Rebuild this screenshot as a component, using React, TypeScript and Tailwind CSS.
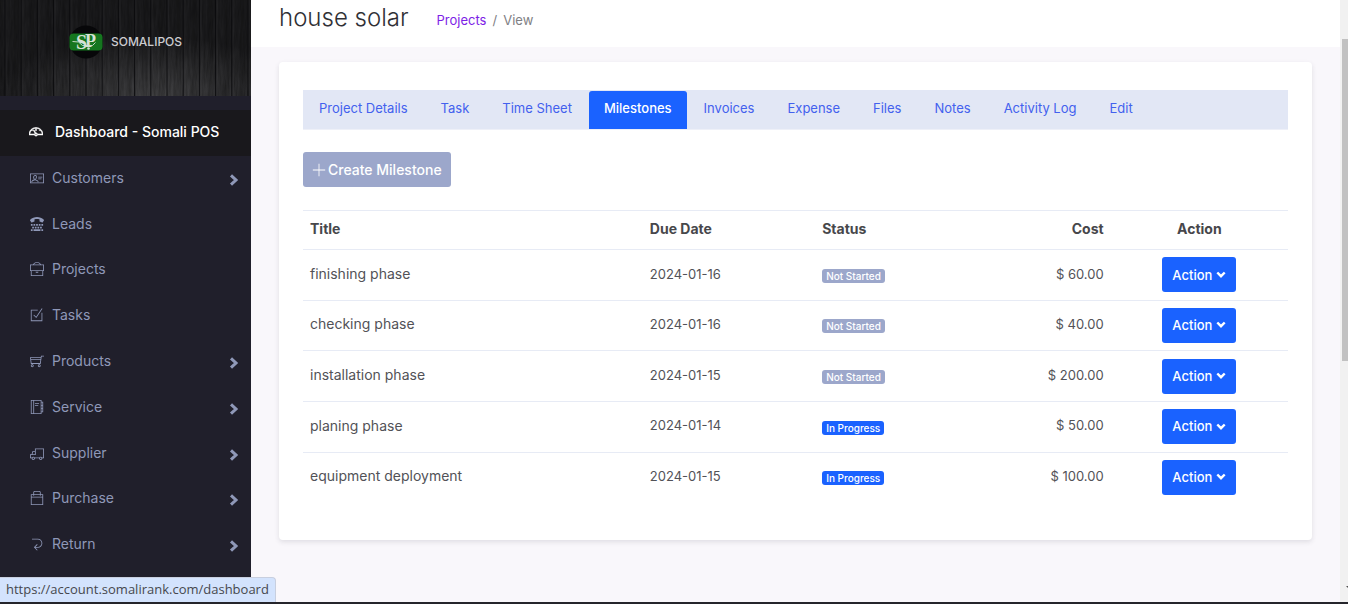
import type { ComponentType } from "react";
import { FaTty } from "react-icons/fa";
import {
  TfiAgenda,
  TfiBackLeft,
  TfiBag,
  TfiBriefcase,
  TfiCheckBox,
  TfiDashboard,
  TfiIdBadge,
  TfiPlus,
  TfiShoppingCart,
  TfiTruck,
} from "react-icons/tfi";

type NavItem = {
  label: string;
  icon: ComponentType<{ className?: string }>;
  expandable?: boolean;
};

const navItems: NavItem[] = [
  { label: "Customers", icon: TfiIdBadge, expandable: true },
  { label: "Leads", icon: FaTty },
  { label: "Projects", icon: TfiBriefcase },
  { label: "Tasks", icon: TfiCheckBox },
  { label: "Products", icon: TfiShoppingCart, expandable: true },
  { label: "Service", icon: TfiAgenda, expandable: true },
  { label: "Supplier", icon: TfiTruck, expandable: true },
  { label: "Purchase", icon: TfiBag, expandable: true },
  { label: "Return", icon: TfiBackLeft, expandable: true },
];

const tabs = [
  "Project Details",
  "Task",
  "Time Sheet",
  "Milestones",
  "Invoices",
  "Expense",
  "Files",
  "Notes",
  "Activity Log",
  "Edit",
];

const milestones = [
  { title: "finishing phase", due: "2024-01-16", status: "Not Started", cost: "$ 60.00" },
  { title: "checking phase", due: "2024-01-16", status: "Not Started", cost: "$ 40.00" },
  { title: "installation phase", due: "2024-01-15", status: "Not Started", cost: "$ 200.00" },
  { title: "planing phase", due: "2024-01-14", status: "In Progress", cost: "$ 50.00" },
  { title: "equipment deployment", due: "2024-01-15", status: "In Progress", cost: "$ 100.00" },
];

function WoodTexture() {
  return (
    <svg
      className="absolute inset-0 h-full w-full"
      viewBox="0 0 251 96"
      preserveAspectRatio="none"
      aria-hidden="true"
    >
      <defs>
        <radialGradient id="glow" cx="0.6" cy="1" r="0.62">
          <stop offset="0" stopColor="#434345" />
          <stop offset="0.5" stopColor="#303032" />
          <stop offset="1" stopColor="#1c1c1e" />
        </radialGradient>
        <pattern id="boards" x="4.5" width="16.2" height="96" patternUnits="userSpaceOnUse">
          <rect width="1.3" height="96" fill="#08080a" fillOpacity="0.85" />
          <rect x="1.3" width="1" height="96" fill="#ffffff" fillOpacity="0.06" />
          <rect x="9" width="5" height="96" fill="#000000" fillOpacity="0.1" />
        </pattern>
        <filter id="grain" x="0" y="0" width="100%" height="100%">
          <feTurbulence type="fractalNoise" baseFrequency="0.5 0.05" numOctaves="3" seed="4" />
          <feColorMatrix values="0 0 0 0 0  0 0 0 0 0  0 0 0 0 0  1.2 0 0 0 -0.3" />
        </filter>
      </defs>
      <rect width="251" height="96" fill="url(#glow)" />
      <rect width="251" height="96" filter="url(#grain)" opacity="0.4" />
      <rect width="251" height="96" fill="url(#boards)" />
    </svg>
  );
}

function Logo() {
  return (
    <svg className="size-[34px]" viewBox="0 0 34 34" aria-hidden="true">
      <circle cx="17" cy="17" r="16.5" fill="#070709" />
      <rect x="0.5" y="8.5" width="33" height="17" rx="4" fill="#15761f" />
      <g fontFamily="Liberation Serif, serif" fontWeight="700" fill="#d5e2d6">
        <text x="7" y="24" fontSize="20">
          S
        </text>
        <text x="16" y="22" fontSize="18">
          P
        </text>
      </g>
      <path d="M3.5 16.5l6 .5 4 3.500h10l3-3" fill="none" stroke="#d5e2d6" strokeWidth="0.9" />
      <circle cx="19.500" cy="23.500" r="1.300" fill="#d5e2d6" />
    </svg>
  );
}

function ChevronRight() {
  return (
    <svg className="mt-1 ml-auto h-3 w-2.5" viewBox="0 0 10 12" aria-hidden="true">
      <path d="M2 1.300L7 6 2 10.700" fill="none" stroke="currentColor" strokeWidth="3" />
    </svg>
  );
}

function ChevronDown() {
  return (
    <svg className="h-2.5 w-2.5" viewBox="0 0 10 10" aria-hidden="true">
      <path d="M1.300 2.500L5 6.200l3.700-3.700" fill="none" stroke="currentColor" strokeWidth="2.400" />
    </svg>
  );
}

function Sidebar() {
  return (
    <aside className="w-[251px] shrink-0 bg-[#201f2b]">
      <a href="#home" className="relative flex h-24 items-center justify-center">
        <WoodTexture />
        <span className="relative flex items-center gap-2 pb-3 text-xs font-medium text-[#cbcbd0]">
          <Logo />
          SOMALIPOS
        </span>
      </a>
      <nav className="pt-3.5">
        <a
          href="#dashboard"
          className="flex h-[46px] items-center gap-3 bg-[#19181c] pb-0.5 pl-[29px] text-sm font-medium text-white"
        >
          <TfiDashboard className="size-3.5 stroke-white stroke-[0.7]" />
          Dashboard - Somali POS
        </a>
        <ul className="grid h-[412px] auto-rows-fr">
          {navItems.map(({ label, icon: Icon, expandable }) => (
            <li key={label}>
              <a
                href={`#${label.toLowerCase()}`}
                className="flex h-full items-center gap-2 pr-3 pb-0.5 pl-[30px] text-sm text-[#8f98b8]"
              >
                <Icon className="size-3.5" />
                {label}
                {expandable && <ChevronRight />}
              </a>
            </li>
          ))}
        </ul>
      </nav>
    </aside>
  );
}

function StatusBadge({ status }: { status: string }) {
  const tone = status === "In Progress" ? "bg-[#1a62ff]" : "bg-[#9ca7cb]";
  return (
    <span
      className={`inline-block rounded-[3px] px-1 text-[10px] leading-[14px] font-medium text-white ${tone}`}
    >
      {status}
    </span>
  );
}

function MilestoneTable() {
  return (
    <table className="mt-[23px] h-[292px] w-full table-fixed border-collapse text-sm text-[#525257]">
      <colgroup>
        <col className="w-[34.5%]" />
        <col className="w-[17.5%]" />
        <col className="w-[15%]" />
        <col className="w-[15%]" />
        <col className="w-[18%]" />
      </colgroup>
      <thead>
        <tr className="h-[39px] border-t border-[#e7ebf5] text-[#47474b]">
          <th className="px-[7px] pb-0.5 text-left">Title</th>
          <th className="px-[7px] pb-0.5 text-left">Due Date</th>
          <th className="px-[7px] pb-0.5 text-left">Status</th>
          <th className="px-[7px] pb-0.5 text-right">Cost</th>
          <th className="px-[7px] pb-0.5 text-center">Action</th>
        </tr>
      </thead>
      <tbody>
        {milestones.map((m) => (
          <tr key={m.title} className="border-t border-[#e7ebf5]">
            <td className="px-[7px] pb-0.5">{m.title}</td>
            <td className="px-[7px] pb-0.5 text-[13px]">{m.due}</td>
            <td className="px-[7px]">
              <StatusBadge status={m.status} />
            </td>
            <td className="px-[7px] pb-0.5 text-right text-[13px]">{m.cost}</td>
            <td className="px-[7px] text-center">
              <button
                type="button"
                className="inline-flex h-[35px] items-center gap-1 rounded-[3px] bg-[#1a62ff] px-2.5 align-middle text-[13px] font-medium text-white"
              >
                Action
                <ChevronDown />
              </button>
            </td>
          </tr>
        ))}
      </tbody>
    </table>
  );
}

export default function App() {
  return (
    <div className="flex h-screen flex-col overflow-hidden bg-[#f9f7fb] font-['Inter',sans-serif]">
      <div className="flex min-h-0 flex-1">
        <Sidebar />
        <main className="min-w-0 flex-1">
          <header className="flex h-[47px] items-start gap-7 bg-white px-7">
            <h1 className="text-2xl leading-9 font-light text-[#303035]">house solar</h1>
            <nav
              aria-label="Breadcrumb"
              className="flex gap-1.5 pt-2.5 text-[13px] leading-5 text-[#808084]"
            >
              <a href="#projects" className="text-[#7d1ee6]">
                Projects
              </a>
              <span>/</span>
              <span>View</span>
            </nav>
          </header>
          <section className="mx-7 mt-[15px] rounded-[4px] bg-white px-6 pt-7 pb-[38px] shadow-[0_2px_5px_rgba(40,40,60,0.12)]">
            <ul className="flex h-10 items-end gap-px border-b border-[#eef0f8] bg-[#e2e7f5] text-[13px]">
              {tabs.map((tab) => (
                <li key={tab}>
                  <a
                    href={`#${tab.toLowerCase().replace(" ", "-")}`}
                    className={
                      tab === "Milestones"
                        ? "flex h-[38px] items-center rounded-t-[3px] bg-[#1a62ff] px-[15px] pb-0.5 font-medium text-white"
                        : "flex h-[38px] items-center px-4 pb-0.5 text-[#4361ee]"
                    }
                  >
                    {tab}
                  </a>
                </li>
              ))}
            </ul>
            <button
              type="button"
              className="mt-[22px] flex h-[35px] items-center gap-0.5 rounded-[3px] bg-[#9ca7cb] px-[9px] text-sm font-medium text-white"
            >
              <TfiPlus className="size-3.5" />
              Create Milestone
            </button>
            <MilestoneTable />
          </section>
        </main>
        <div className="flex w-2 shrink-0 flex-col bg-[#f1f1f1] pt-[39px] pl-0.5" aria-hidden="true">
          <div className="h-[322px] bg-[#c1c1c1]" />
          <svg className="mt-auto mb-3 h-1 w-0.5 self-end" viewBox="0 0 2 4">
            <path d="M0 0h2v2z" fill="#505050" />
          </svg>
        </div>
      </div>
      <div className="h-0.5 bg-[#25252b]" aria-hidden="true" />
      <div className="absolute bottom-0.5 left-0 flex h-[25px] items-center rounded-tr-[4px] border-t border-r border-[#c8cfdf] bg-[#d3e3fd] px-1.5 font-['Open_Sans',sans-serif] text-[13px] text-[#46484d]">
        https://account.somalirank.com/dashboard
      </div>
    </div>
  );
}
